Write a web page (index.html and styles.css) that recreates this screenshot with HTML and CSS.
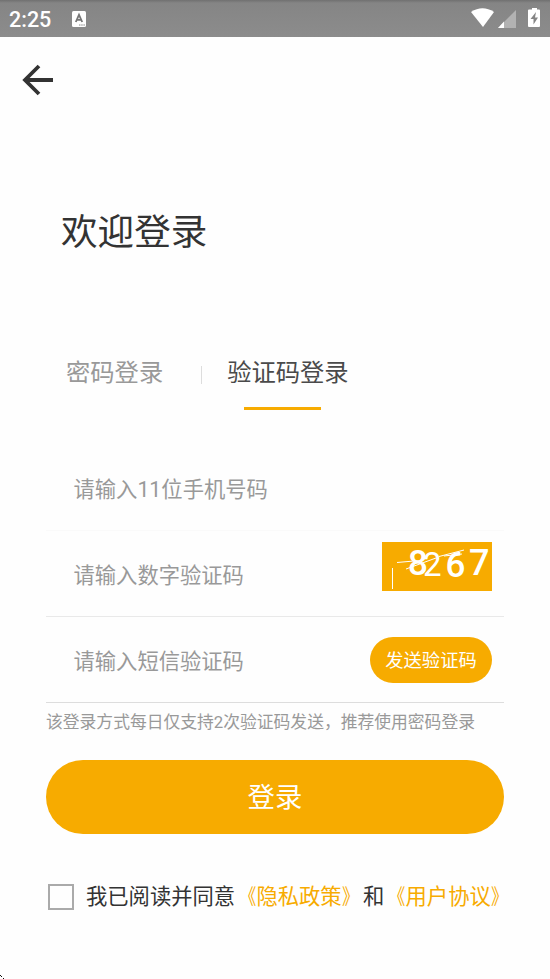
FILE: index.html
```html
<!DOCTYPE html>
<html lang="zh-CN">
<head>
<meta charset="utf-8">
<title>欢迎登录</title>
<link rel="stylesheet" href="styles.css">
</head>
<body>
<header class="status">
  <span class="time">2:25</span>
  <svg class="input-icon" width="14" height="16" viewBox="0 0 14 16"><rect width="14" height="16" rx="1.5" fill="#fff"/><path d="M3.8 11 7 3.8 10.2 11M5 8.8h4" fill="none" stroke="#777" stroke-width="1.8"/><path d="M7 14h6" stroke="#888" stroke-dasharray="1.5 .7"/></svg>
  <svg class="signals" width="70" height="20" viewBox="0 0 70 20">
    <path d="M0 4Q11.500-3.500 23 4L12 19Z" fill="#fff"/>
    <path d="M45 2V20H27Z" fill="#b2b2b2"/><path d="M33 13.500V20H27Z" fill="#fff"/>
    <path d="M58 1.500h3V0h5v1.500h2q1 0 1 1V18q0 1-1 1H58q-1 0-1-1V2.500q0-1 1-1Z" fill="#fff"/><path d="m65 4-5.500 7h3v5.500l4.500-7h-3Z" fill="#858585"/>
  </svg>
</header>
<main class="page">
  <svg class="back" width="32" height="32" viewBox="0 0 32 32"><path d="M17 2 3 16l14 14M3 16h28" fill="none" stroke="#333" stroke-width="3.800"/></svg>
  <h1 class="title">欢迎登录</h1>
  <nav class="tabs">
    <span class="tab">密码登录</span><i class="divider"></i><span class="tab active">验证码登录</span>
  </nav>
  <form class="form">
    <div class="field first"><span>请输入11位手机号码</span></div>
    <div class="field second"><span>请输入数字验证码</span>
      <svg class="captcha" width="110" height="49" viewBox="0 0 110 49">
        <rect width="110" height="49" fill="#f7ab00"/>
        <g fill="#fff" font-family="Roboto, sans-serif">
          <text x="26" y="33" font-size="35" font-weight="500">8</text>
          <text x="41" y="34" font-size="33" font-weight="400">2</text>
          <text x="63.500" y="35" font-size="35" font-weight="500">6</text>
          <text x="87" y="33" font-size="36" font-weight="500">7</text>
        </g>
        <path d="M15 20.500 32 19M24 27 54 16M57 14.500 82 8M62 14l18-2M10.500 26v21" fill="none" stroke="#fff"/>
      </svg>
    </div>
    <div class="field third"><span>请输入短信验证码</span><button class="send" type="button">发送验证码</button></div>
    <p class="hint">该登录方式每日仅支持2次验证码发送，推荐使用密码登录</p>
    <button class="login" type="button">登录</button>
    <div class="agree"><i class="box"></i><span>我已阅读并同意<a><b class="open">《</b>隐私政策<b class="close">》</b></a>和<a><b class="open">《</b>用户协议<b class="close">》</b></a></span></div>
  </form>
</main>
<svg class="corner" width="5" height="5" viewBox="0 0 5 5"><path d="M0 1h1v1H0zM1 2h1v1H1zM3 4h1v1H3z" fill="#111"/></svg>
</body>
</html>
```
FILE: styles.css
```css
* { box-sizing: border-box; }
body {
  position: relative;
  margin: 0;
  height: 979px;
  overflow: hidden;
  background: #fefefe;
  color: #333;
  font-family: Roboto, "Noto Sans CJK SC", sans-serif;
  font-weight: 400;
}
.status {
  display: flex;
  align-items: center;
  height: 37px;
  padding: 0 9px;
  background: linear-gradient(#707070 0, #858585 3px, #8c8c8c);
  color: #fff;
}
.time { width: 63px; font-size: 21.5px; font-weight: 500; line-height: 37px; padding-top: 1px; }
.signals { margin: 0 0 1px auto; }
.back { display: block; margin: 27px 0 0 22px; }
.title { margin: 110px 0 0 61px; font-size: 36.6px; line-height: 54px; font-weight: 400; }
.tabs { display: flex; margin: 95px 0 0 66px; height: 57px; font-size: 24.3px; line-height: 36px; }
.tab { color: #999; }
.tab.active { color: #4a4a4a; display: flex; flex-direction: column; align-items: center; }
.tab.active::after { content: ""; width: 77px; height: 3px; margin: 16px 11px 0 0; background: #f7ab00; }
.divider { width: 1px; height: 18px; margin: 11px 25px 0 38px; background: #ddd; }
.form { margin: 0 46px; padding-top: 33px; }
.field {
  display: flex;
  justify-content: space-between;
  align-items: center;
  height: 86px;
  padding: 0 12px 0 27.5px;
  border-bottom: 1px solid #e9e9e9;
  color: #999;
  font-size: 21.3px;
}
.field.first { border-color: #fafafa; }
.field.third { border-color: #ddd; }
.captcha { margin-bottom: 14px; }
.send {
  width: 122px;
  height: 46px;
  padding: 1px 0 0;
  border: 0;
  border-radius: 23px;
  background: #f7ab00;
  color: #fff;
  font: 400 18.3px/45px Roboto, "Noto Sans CJK SC", sans-serif;
}
.hint { margin: 7px 0 0; color: #999; font-size: 16.8px; line-height: 24px; white-space: nowrap; }
.login {
  display: block;
  width: 458px;
  height: 74px;
  margin-top: 26px;
  padding: 2px 0 0;
  border: 0;
  border-radius: 37px;
  background: #f7ab00;
  color: #fff;
  font: 400 27.4px/72px Roboto, "Noto Sans CJK SC", sans-serif;
}
.agree { display: flex; align-items: center; margin-top: 47px; height: 32px; font-size: 21.3px; line-height: 32px; white-space: nowrap; }
.box { flex: none; width: 26px; height: 26px; margin: 0 12px 0 2px; border: 2px solid #aaa; }
.agree a { color: #f7ab00; }
.agree b { display: inline-block; font-weight: 400; }
.open { transform: scaleX(.8); transform-origin: right; }
.close { transform: scaleX(.8); transform-origin: left; }
.corner { position: absolute; left: 0; bottom: 0; }
```
